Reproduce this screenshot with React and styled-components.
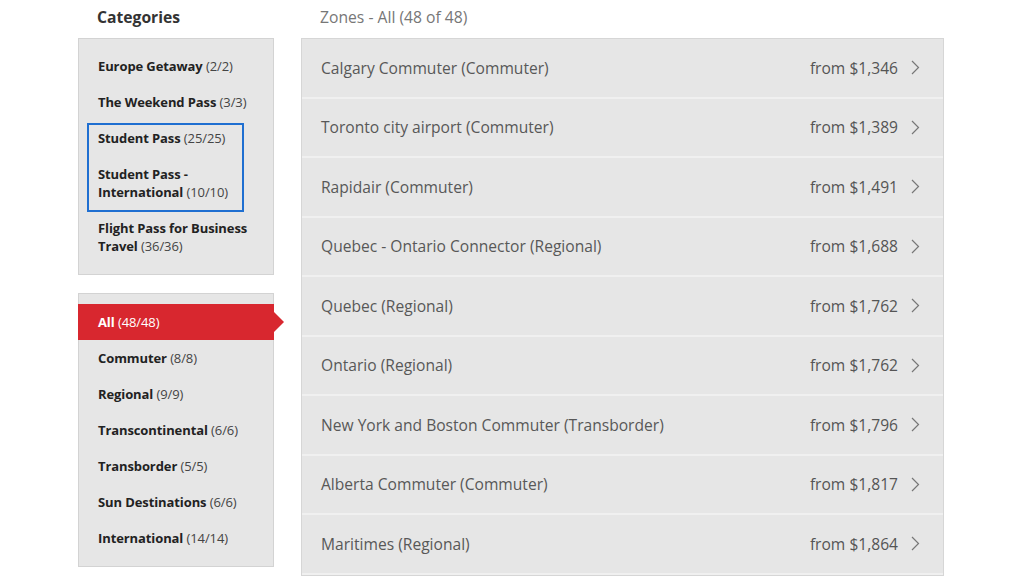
import React from "react";
import styled, { createGlobalStyle } from "styled-components";

const Global = createGlobalStyle`
  body {
    margin: 0;
    background: #ffffff;
    font-family: "Open Sans", "Liberation Sans", sans-serif;
  }
`;

const Page = styled.div`
  display: flex;
  gap: 27px;
  padding-left: 78px;
  width: 1024px;
  height: 576px;
  box-sizing: border-box;
  overflow: hidden;
`;

const Sidebar = styled.div`
  width: 196px;
  display: flex;
  flex-direction: column;
`;

const Main = styled.div`
  width: 643px;
  display: flex;
  flex-direction: column;
`;

const Heading = styled.div`
  height: 38px;
  line-height: 34px;
  font-size: 15.7px;
  padding-left: ${(p) => p.$indent}px;
  font-weight: ${(p) => (p.$bold ? 700 : 400)};
  color: ${(p) => (p.$bold ? "#333333" : "#777777")};
`;

const Panel = styled.div`
  background: #e6e6e6;
  border: 1px solid #d3d3d3;
  padding: ${(p) => p.$top || 9}px 0 10px;
  margin-bottom: ${(p) => p.$gap || 0}px;
`;

const Item = styled.div`
  position: relative;
  padding: 9px 12px 9px ${(p) => p.$indent || 19}px;
  font-size: 13px;
  line-height: 18px;
  font-weight: 700;
  letter-spacing: -0.1px;
  color: ${(p) => (p.$active ? "#ffffff" : "#222222")};
  background: ${(p) => (p.$active ? "#d8272f" : "transparent")};
  margin: ${(p) => (p.$active ? "0 -1px 0 -1px" : "0")};
  padding-left: ${(p) => (p.$active ? (p.$indent || 19) + 1 : p.$indent || 19)}px;

  span {
    font-weight: 400;
    color: ${(p) => (p.$active ? "#ffffff" : "#444444")};
  }

  ${(p) =>
    p.$active &&
    `
    &::after {
      content: "";
      position: absolute;
      right: -10px;
      top: 8px;
      border-left: 10px solid #d8272f;
      border-top: 10px solid transparent;
      border-bottom: 10px solid transparent;
    }
  `}
`;

const Group = styled.div`
  margin: 2px 28px -3px 7px;
  outline: 2px solid #1f6fd1;
  outline-offset: -3px;

  ${Item}:first-child {
    padding-top: 7px;
  }
  ${Item}:last-child {
    padding-bottom: 12px;
  }
`;

const List = styled.div`
  background: #e6e6e6;
  border: 1px solid #d6d6d6;
`;

const Row = styled.div`
  display: flex;
  align-items: center;
  height: 57.5px;
  padding: 0 23px 0 19px;
  border-bottom: 2px solid #f0f0f0;
  font-size: 15.6px;
  color: #585858;
`;

const Name = styled.div`
  flex: 1;
`;

const Price = styled.div`
  color: #555555;
  margin-right: 13px;
`;

const Chevron = () => (
  <svg width="9" height="15" viewBox="0 0 9 15">
    <path d="M1 1 L7.5 7.5 L1 14" fill="none" stroke="#777" strokeWidth="1.2" />
  </svg>
);

const zones = [
  ["Calgary Commuter (Commuter)", "$1,346"],
  ["Toronto city airport (Commuter)", "$1,389"],
  ["Rapidair (Commuter)", "$1,491"],
  ["Quebec - Ontario Connector (Regional)", "$1,688"],
  ["Quebec (Regional)", "$1,762"],
  ["Ontario (Regional)", "$1,762"],
  ["New York and Boston Commuter (Transborder)", "$1,796"],
  ["Alberta Commuter (Commuter)", "$1,817"],
  ["Maritimes (Regional)", "$1,864"],
];

const types = [
  ["All", "48/48"],
  ["Commuter", "8/8"],
  ["Regional", "9/9"],
  ["Transcontinental", "6/6"],
  ["Transborder", "5/5"],
  ["Sun Destinations", "6/6"],
  ["International", "14/14"],
];

export default function App() {
  return (
    <>
      <Global />
      <Page>
        <Sidebar>
          <Heading $bold $indent={19}>Categories</Heading>
          <Panel $gap={18}>
            <Item>
              Europe Getaway <span>(2/2)</span>
            </Item>
            <Item>
              The Weekend Pass <span>(3/3)</span>
            </Item>
            <Group>
              <Item $indent={12}>
                Student Pass <span>(25/25)</span>
              </Item>
              <Item $indent={12}>
                Student Pass -<br />
                International <span>(10/10)</span>
              </Item>
            </Group>
            <Item>
              Flight Pass for Business
              <br />
              Travel <span>(36/36)</span>
            </Item>
          </Panel>
          <Panel $top={10}>
            {types.map(([label, count], i) => (
              <Item key={label} $active={i === 0}>
                {label} <span>({count})</span>
              </Item>
            ))}
          </Panel>
        </Sidebar>
        <Main>
          <Heading $indent={19}>Zones - All (48 of 48)</Heading>
          <List>
            {zones.map(([name, price]) => (
              <Row key={name}>
                <Name>{name}</Name>
                <Price>from {price}</Price>
                <Chevron />
              </Row>
            ))}
          </List>
        </Main>
      </Page>
    </>
  );
}
